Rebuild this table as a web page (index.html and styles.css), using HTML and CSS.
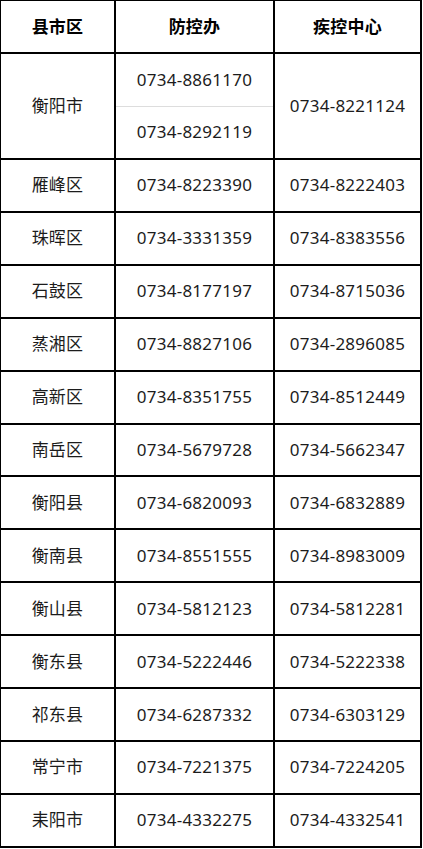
FILE: index.html
```html
<!DOCTYPE html>
<html lang="zh">
<head>
<meta charset="utf-8">
<link rel="stylesheet" href="styles.css">
</head>
<body>
<table class="contacts">
  <colgroup><col class="c1"><col class="c2"><col class="c3"></colgroup>
  <thead>
    <tr><th>县市区</th><th>防控办</th><th>疾控中心</th></tr>
  </thead>
  <tbody>
    <tr class="sub"><td rowspan="2">衡阳市</td><td class="split-top">0734-8861170</td><td rowspan="2">0734-8221124</td></tr>
    <tr class="sub"><td class="split-bottom">0734-8292119</td></tr>
    <tr><td>雁峰区</td><td>0734-8223390</td><td>0734-8222403</td></tr>
    <tr><td>珠晖区</td><td>0734-3331359</td><td>0734-8383556</td></tr>
    <tr><td>石鼓区</td><td>0734-8177197</td><td>0734-8715036</td></tr>
    <tr><td>蒸湘区</td><td>0734-8827106</td><td>0734-2896085</td></tr>
    <tr><td>高新区</td><td>0734-8351755</td><td>0734-8512449</td></tr>
    <tr><td>南岳区</td><td>0734-5679728</td><td>0734-5662347</td></tr>
    <tr><td>衡阳县</td><td>0734-6820093</td><td>0734-6832889</td></tr>
    <tr><td>衡南县</td><td>0734-8551555</td><td>0734-8983009</td></tr>
    <tr><td>衡山县</td><td>0734-5812123</td><td>0734-5812281</td></tr>
    <tr><td>衡东县</td><td>0734-5222446</td><td>0734-5222338</td></tr>
    <tr><td>祁东县</td><td>0734-6287332</td><td>0734-6303129</td></tr>
    <tr><td>常宁市</td><td>0734-7221375</td><td>0734-7224205</td></tr>
    <tr><td>耒阳市</td><td>0734-4332275</td><td>0734-4332541</td></tr>
  </tbody>
</table>
</body>
</html>
```

FILE: styles.css
```css
html, body {
  margin: 0;
  padding: 0;
  background: #fff;
}

.contacts {
  border-collapse: collapse;
  table-layout: fixed;
  width: 423px;
  margin: -1px 0 0 -1px;
  font-family: "Noto Sans", "Noto Sans CJK SC", sans-serif;
  font-size: 17px;
  letter-spacing: 0.25px;
  color: #1c1c1c;
}

.c1 { width: 115px; }
.c2 { width: 159px; }
.c3 { width: 147px; }

.contacts th,
.contacts td {
  border: 2px solid #000;
  padding: 0;
  text-align: center;
  vertical-align: middle;
  line-height: 20px;
}

.contacts tr {
  height: 52.92px;
}

.contacts thead tr {
  height: 53px;
}

.contacts th {
  font-weight: 700;
  color: #000;
}

.contacts tr.sub {
  height: 53px;
}

.contacts td.split-top {
  border-bottom: 1px solid #ddd;
}

.contacts td.split-bottom {
  border-top: 1px solid #ddd;
}
```
